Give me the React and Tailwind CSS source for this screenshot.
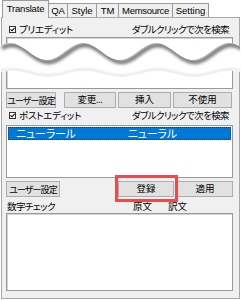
import React from "react";

const jp = "font-['Noto_Sans_CJK_JP',sans-serif] [font-feature-settings:'palt']";

function Check() {
  return (
    <span className="w-[7px] h-[7px] border border-[#333] bg-white flex items-center justify-center shrink-0">
      <svg width="5" height="5" viewBox="0 0 5 5">
        <path d="M0.5 2.3 L2 3.8 L4.6 0.8" stroke="#000" strokeWidth="1.1" fill="none" />
      </svg>
    </span>
  );
}

function Btn({ className = "", children }) {
  return (
    <div
      className={`h-[16px] border border-[#adadad] bg-[#e1e1e1] flex items-center justify-center text-[9.5px] leading-none text-black whitespace-nowrap ${jp} ${className}`}
    >
      {children}
    </div>
  );
}

function CheckRow({ label, className = "" }) {
  return (
    <div className={`h-[11px] flex items-center pl-[3px] text-[9.5px] leading-none text-black whitespace-nowrap ${jp} ${className}`}>
      <Check />
      <span className="ml-[3px] tracking-[-0.3px]">{label}</span>
      <span className="ml-auto mr-[4px] tracking-[-0.6px]">ダブルクリックで次を検索</span>
    </div>
  );
}

function Tear() {
  const P = 73;
  let up = "";
  let down = "";
  const yu = (x) => 51.5 - 8.5 * Math.cos((2 * Math.PI * (x - 10)) / P);
  const yd = (x) => 74 + 3 * Math.sin((2 * Math.PI * (x - 30)) / P);
  for (let x = 0; x <= 241; x += 2) up += `${x === 0 ? "M" : "L"}${x},${yu(x).toFixed(2)} `;
  for (let x = 241; x >= 0; x -= 2) down += `L${x},${yd(x).toFixed(2)} `;
  let lower = "";
  for (let x = 0; x <= 241; x += 2) lower += `${x === 0 ? "M" : "L"}${x},${yd(x).toFixed(2)} `;
  return (
    <svg className="absolute left-0 top-0 pointer-events-none" width="241" height="300" viewBox="0 0 241 300">
      <defs>
        <filter id="bl" x="-10%" y="-50%" width="120%" height="200%">
          <feGaussianBlur stdDeviation="1.8" />
        </filter>
        <filter id="bl2" x="-10%" y="-50%" width="120%" height="200%">
          <feGaussianBlur stdDeviation="1" />
        </filter>
        <clipPath id="cp">
          <path d={up + down + "Z"} />
        </clipPath>
      </defs>
      <path d={up + down + "Z"} fill="#ffffff" />
      <g clipPath="url(#cp)">
        <path d={up} transform="translate(2,2)" stroke="#7c7c7c" strokeWidth="4.5" fill="none" filter="url(#bl)" />
        <path d={lower} transform="translate(0,-1.5)" stroke="#e2e2e2" strokeWidth="2" fill="none" filter="url(#bl2)" />
      </g>
    </svg>
  );
}

export default function App() {
  return (
    <div className="w-[241px] h-[300px] bg-white relative overflow-hidden font-['Liberation_Sans',sans-serif]">
      {/* tabs */}
      <div className="flex items-end h-[17px] pl-[2px] relative z-10 text-[9.5px] leading-none text-black">
        <div className="h-[18px] w-[47px] mb-[-1px] bg-[#f0f0f0] border border-b-0 border-[#9a9a9a] flex items-center justify-center pb-[2px] tracking-[-0.2px]">
          Translate
        </div>
        <div className="h-[14px] w-[19px] bg-[#f0f0f0] border-t border-r border-[#9a9a9a] flex items-center justify-center">QA</div>
        <div className="h-[14px] w-[29px] bg-[#f0f0f0] border-t border-r border-[#9a9a9a] flex items-center justify-center">Style</div>
        <div className="h-[14px] w-[22px] bg-[#f0f0f0] border-t border-r border-[#9a9a9a] flex items-center justify-center">TM</div>
        <div className="h-[14px] w-[54px] bg-[#f0f0f0] border-t border-r border-[#9a9a9a] flex items-center justify-center tracking-[-0.3px]">Memsource</div>
        <div className="h-[14px] w-[36px] bg-[#f0f0f0] border-t border-r border-[#9a9a9a] flex items-center justify-center">Setting</div>
      </div>

      {/* panel */}
      <div className="ml-[1px] w-[239px] border border-[#a8a8a8] bg-[#f0f0f0] pl-[4px] pr-[6px] pb-[7px] flex flex-col">
        <CheckRow label="プリエディット" className="mt-[6px]" />
        <div className="mt-[2px] h-[52px] bg-white border border-[#9a9a9a] shadow-[inset_1px_1px_0_#d4d4d4]" />

        <div className="mt-[3px] flex">
          <Btn className="w-[50px]">
            <span className="text-[9px] tracking-[-0.9px]">ユーザー設定</span>
          </Btn>
          <Btn className="w-[52px] ml-[8px]">
            <span className="tracking-[-0.4px]">変更...</span>
          </Btn>
          <Btn className="w-[53px] ml-[2px]">挿入</Btn>
          <Btn className="w-[59px] ml-[2px]">不使用</Btn>
        </div>

        <CheckRow label="ポストエディット" className="mt-[2px]" />

        <div className="mt-[4px] h-[53px] bg-white border border-[#9a9a9a] p-[1px]">
          <div className={`h-[13px] bg-[#0078d7] outline-1 outline-dotted outline-[#1b3a66] -outline-offset-1 flex items-center text-white text-[11px] leading-none whitespace-nowrap ${jp}`}>
            <span className="ml-[8px] tracking-[-0.2px]">ニューラール</span>
            <span className="ml-[52px] tracking-[-0.2px]">ニューラル</span>
          </div>
        </div>

        <div className="mt-[3px] flex">
          <Btn className="w-[54px]">
            <span className="text-[9px] tracking-[-0.9px]">ユーザー設定</span>
          </Btn>
          <div className="relative ml-[58px]">
            <Btn className="w-[56px]">登録</Btn>
            <div className="absolute -left-[3px] -right-[4px] -top-[6px] -bottom-[5px] border-[3px] border-[#ee4a4a]" />
          </div>
          <Btn className="w-[56px] ml-[3px]">適用</Btn>
        </div>

        <div className={`mt-[5px] h-[10px] flex items-center text-[9.5px] leading-none text-black whitespace-nowrap ${jp}`}>
          <span className="w-[127px] pl-[1px] tracking-[-0.6px]">数字チェック</span>
          <span className="w-[35px]">原文</span>
          <span>訳文</span>
        </div>

        <div className="mt-[1px] h-[78px] bg-white border border-[#9a9a9a] shadow-[inset_1px_1px_0_#d4d4d4]" />
      </div>

      <Tear />
    </div>
  );
}
